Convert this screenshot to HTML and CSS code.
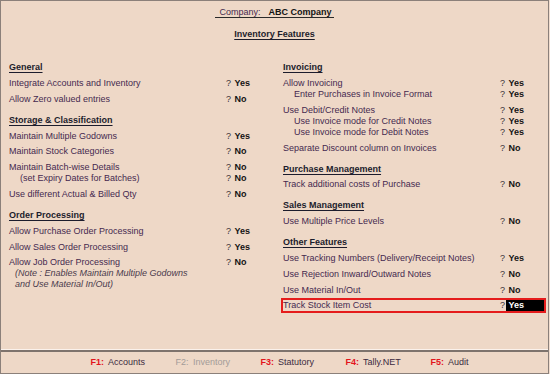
FILE: index.html
```html
<!DOCTYPE html>
<html>
<head>
<meta charset="utf-8">
<title>Inventory Features</title>
<link rel="stylesheet" href="styles.css">
</head>
<body>
<div class="screen">
  <div class="main">
    <div class="company"><span class="company-u"><span class="clbl">Company:</span><b class="cname">ABC Company</b></span></div>
    <div class="title"><span>Inventory Features</span></div>
    <div class="cols">
      <div class="col col-left">
        <div class="hd first"><span>General</span></div>
        <div class="item"><div class="row"><span class="label">Integrate Accounts and Inventory</span><span class="val"><span class="q">?</span><span class="v">Yes</span></span></div></div>
        <div class="item"><div class="row"><span class="label">Allow Zero valued entries</span><span class="val"><span class="q">?</span><span class="v">No</span></span></div></div>

        <div class="hd"><span>Storage &amp; Classification</span></div>
        <div class="item"><div class="row"><span class="label">Maintain Multiple Godowns</span><span class="val"><span class="q">?</span><span class="v">Yes</span></span></div></div>
        <div class="item"><div class="row"><span class="label">Maintain Stock Categories</span><span class="val"><span class="q">?</span><span class="v">No</span></span></div></div>
        <div class="item">
          <div class="row"><span class="label">Maintain Batch-wise Details</span><span class="val"><span class="q">?</span><span class="v">No</span></span></div>
          <div class="row sub"><span class="label">(set Expiry Dates for Batches)</span><span class="val"><span class="q">?</span><span class="v">No</span></span></div>
        </div>
        <div class="item"><div class="row"><span class="label">Use different Actual &amp; Billed Qty</span><span class="val"><span class="q">?</span><span class="v">No</span></span></div></div>

        <div class="hd"><span>Order Processing</span></div>
        <div class="item"><div class="row"><span class="label">Allow Purchase Order Processing</span><span class="val"><span class="q">?</span><span class="v">Yes</span></span></div></div>
        <div class="item"><div class="row"><span class="label">Allow Sales Order Processing</span><span class="val"><span class="q">?</span><span class="v">Yes</span></span></div></div>
        <div class="item">
          <div class="row"><span class="label">Allow Job Order Processing</span><span class="val"><span class="q">?</span><span class="v">No</span></span></div>
          <div class="note">(Note : Enables Maintain Multiple Godowns</div>
          <div class="note">and Use Material In/Out)</div>
        </div>
      </div>

      <div class="col col-right">
        <div class="hd first"><span>Invoicing</span></div>
        <div class="item">
          <div class="row"><span class="label">Allow Invoicing</span><span class="val"><span class="q">?</span><span class="v">Yes</span></span></div>
          <div class="row sub"><span class="label">Enter Purchases in Invoice Format</span><span class="val"><span class="q">?</span><span class="v">Yes</span></span></div>
        </div>
        <div class="item">
          <div class="row"><span class="label">Use Debit/Credit Notes</span><span class="val"><span class="q">?</span><span class="v">Yes</span></span></div>
          <div class="row sub"><span class="label">Use Invoice mode for Credit Notes</span><span class="val"><span class="q">?</span><span class="v">Yes</span></span></div>
          <div class="row sub"><span class="label">Use Invoice mode for Debit Notes</span><span class="val"><span class="q">?</span><span class="v">Yes</span></span></div>
        </div>
        <div class="item"><div class="row"><span class="label">Separate Discount column on Invoices</span><span class="val"><span class="q">?</span><span class="v">No</span></span></div></div>

        <div class="hd"><span>Purchase Management</span></div>
        <div class="item"><div class="row"><span class="label">Track additional costs of Purchase</span><span class="val"><span class="q">?</span><span class="v">No</span></span></div></div>

        <div class="hd"><span>Sales Management</span></div>
        <div class="item"><div class="row"><span class="label">Use Multiple Price Levels</span><span class="val"><span class="q">?</span><span class="v">No</span></span></div></div>

        <div class="hd"><span>Other Features</span></div>
        <div class="item"><div class="row"><span class="label">Use Tracking Numbers (Delivery/Receipt Notes)</span><span class="val"><span class="q">?</span><span class="v">Yes</span></span></div></div>
        <div class="item"><div class="row"><span class="label">Use Rejection Inward/Outward Notes</span><span class="val"><span class="q">?</span><span class="v">No</span></span></div></div>
        <div class="item"><div class="row"><span class="label">Use Material In/Out</span><span class="val"><span class="q">?</span><span class="v">No</span></span></div></div>
        <div class="item"><div class="row hl"><span class="label">Track Stock Item Cost</span><span class="val"><span class="q">?</span><span class="v">Yes</span></span></div></div>
      </div>
    </div>
  </div>
  <div class="footer">
    <div class="fitem"><span class="fk">F1:</span>Accounts</div>
    <div class="fitem off"><span class="fk">F2:</span>Inventory</div>
    <div class="fitem"><span class="fk">F3:</span>Statutory</div>
    <div class="fitem"><span class="fk">F4:</span>Tally.NET</div>
    <div class="fitem"><span class="fk">F5:</span>Audit</div>
  </div>
</div>
</body>
</html>
```
FILE: styles.css
```css
html, body {
  margin: 0;
  padding: 0;
}
body {
  width: 550px;
  height: 374px;
  overflow: hidden;
  background: #f1ddcf;
}
.screen {
  width: 549px;
  height: 374px;
  box-sizing: border-box;
  border: 1px solid #8b807a;
  display: flex;
  flex-direction: column;
  background: #eed8c7;
  font-family: "Liberation Sans", Arial, sans-serif;
  font-size: 9px;
  line-height: 11px;
  color: #45294f;
}
.main {
  flex: 1;
  border-bottom: 1px solid #fbf2ec;
}
.company {
  margin-top: 5.5px;
  text-align: center;
  white-space: nowrap;
}
.company-u {
  border-bottom: 1px solid #2a2a2a;
  padding: 0 2px 0 4px;
}
.cname {
  margin-left: 8px;
  color: #141414;
}
.title {
  margin-top: 11.5px;
  text-align: center;
  font-weight: bold;
  color: #1d1d2b;
}
.title span,
.hd span {
  text-decoration: underline;
  text-underline-offset: 1.5px;
}
.cols {
  display: flex;
  gap: 24px;
  margin-top: 22.3px;
  padding-left: 8px;
}
.col-left {
  width: 250px;
}
.col-right {
  width: 261px;
}
.hd {
  margin-top: 10px;
  margin-bottom: 0.8px;
  font-weight: bold;
  color: #1c1c2c;
  white-space: nowrap;
}
.hd.first {
  margin-top: 0;
}
.item {
  margin-top: 4.8px;
}
.row {
  display: flex;
  height: 11px;
}
.label {
  width: 217px;
  flex: none;
  box-sizing: border-box;
  white-space: nowrap;
}
.sub .label {
  padding-left: 11px;
}
.val {
  display: flex;
  flex: 1;
}
.q {
  width: 6px;
  flex: none;
  color: #3a3238;
}
.v {
  flex: 1;
  padding-left: 2.5px;
  font-weight: bold;
  color: #141414;
}
.note {
  font-style: italic;
  padding-left: 6px;
  color: #4a3a4c;
  white-space: nowrap;
}
.hl {
  outline: 2px solid #e51c1c;
}
.hl .v {
  background: #000;
  color: #fff;
}
.footer {
  height: 21px;
  border-top: 2px solid #7e736d;
  display: flex;
  padding-left: 89.5px;
  line-height: 21px;
  color: #3b2a40;
}
.fitem {
  width: 85px;
  flex: none;
  white-space: nowrap;
}
.fk {
  display: inline-block;
  width: 17.5px;
  color: #e3141b;
  font-weight: bold;
}
.off,
.off .fk {
  color: #a39b98;
  font-weight: normal;
}
```
